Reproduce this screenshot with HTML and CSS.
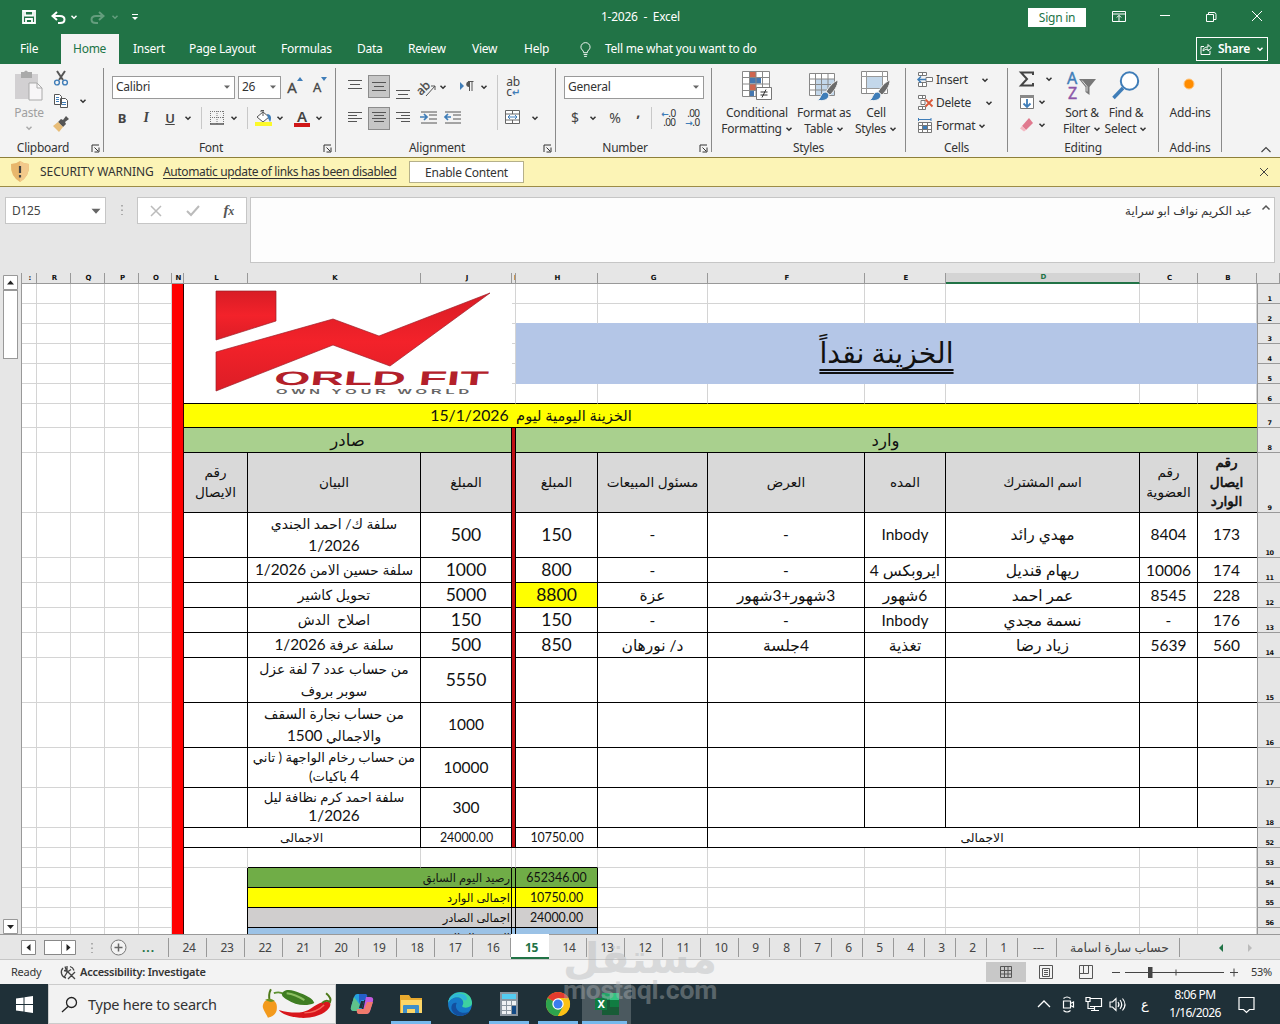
FILE: index.html
```html
<!DOCTYPE html>
<html lang="en">
<head>
<meta charset="utf-8">
<title>1-2026 - Excel</title>
<link rel="stylesheet" href="styles.css">
</head>
<body>
<svg class="defs" aria-hidden="true">
  <symbol id="chev" viewBox="0 0 8 8"><path d="M1.500 2.800 4 5.200 6.500 2.800" fill="none" stroke="currentColor" stroke-width="1.500"/></symbol>
  <symbol id="tri" viewBox="0 0 8 8"><path d="M1 2.500h6L4 5.800z" fill="#666"/></symbol>
  <symbol id="launch" viewBox="0 0 9 9"><path d="M1 8V1h7M3.500 3.500 7 7M8 3.500V8H3.500" fill="none" stroke="#333"/></symbol>
  <symbol id="brush" viewBox="0 0 30 30"><path d="M29 9c-5 2-10 8-12 12l4 3c4-4 8-9 8-15z" fill="#6b6b6b" stroke="#f3f3f3"/><path d="M8 29c4 0 3-7 8-8 3 0 5 3 3 6-3 3-7 3-11 2z" fill="#3f7db8" stroke="#f3f3f3"/></symbol>
</svg>

<header class="title">
  <svg class="save" viewBox="0 0 14 14"><path d="M1 1h12v12H1zM3 1v4.500h8V1M4 13V9h6v4" fill="none" stroke="#fff" stroke-width="1.800"/></svg>
  <svg class="undo" viewBox="0 0 15 13"><path d="M6 1 1.500 5 6 9M2 5h7c6 0 6 7 0 7H7" fill="none" stroke="#fff" stroke-width="2"/></svg>
  <svg class="ch w"><use href="#chev"/></svg>
  <svg class="undo dim flip" viewBox="0 0 15 13"><path d="M6 1 1.500 5 6 9M2 5h7c6 0 6 7 0 7H7" fill="none" stroke="#fff" stroke-width="2"/></svg>
  <svg class="ch w dim"><use href="#chev"/></svg>
  <svg class="ch w" viewBox="0 0 8 8"><path d="M1 1.500h6" stroke="#fff"/><path d="M1 4h6L4 7z" fill="#fff"/></svg>
  <span class="doc">1-2026&nbsp; -&nbsp; Excel</span>
  <span class="signin">Sign in</span>
  <svg class="i14" viewBox="0 0 14 14"><path d="M.5 1.500h13v10H.5zM.5 4h13M7 11V5.500M4.800 7.500 7 5.300l2.200 2.200" fill="none" stroke="#fff"/></svg>
  <svg class="i14" viewBox="0 0 14 14"><path d="M2 5.500h10" stroke="#fff"/></svg>
  <svg class="i14" viewBox="0 0 14 14"><path d="M2.500 4.500h7v7h-7zM4.500 4.500v-2h5.500q2 0 2 2v5H9.500" fill="none" stroke="#fff"/></svg>
  <svg class="i14" viewBox="0 0 14 14"><path d="M2 1l10 10M12 1 2 11" stroke="#fff"/></svg>
</header>

<nav class="tabs">
  <span>File</span><span class="on">Home</span><span>Insert</span><span>Page Layout</span><span>Formulas</span><span>Data</span><span>Review</span><span>View</span><span>Help</span>
  <svg class="bulb" viewBox="0 0 12 17"><path d="M4 12c0-3-3-3-3-6a5 5 0 0 1 10 0c0 3-3 3-3 6zM4 14h4M4.500 16h3" fill="none" stroke="#fff"/></svg>
  <span>Tell me what you want to do</span>
  <span class="share"><svg class="i12" viewBox="0 0 12 12"><path d="M4 3.500H1v8h9V8M3 8q0-4 5-4V1.500L11.500 5 8 8V6Q5 6 3 8z" fill="none" stroke="#fff"/></svg>Share<svg class="ch w"><use href="#chev"/></svg></span>
</nav>

<section class="ribbon">
  <div class="group clip">
    <div class="body">
      <div class="big dis">
        <svg class="i30" viewBox="0 0 30 30"><path d="M1 3h23v25H1z" fill="#d2d0d2"/><path d="M7 1h3q2-3 4 0h4v6H7z" fill="#aaa"/><path d="M15 12h8l5 5v12H15z" fill="#f8f6f8" stroke="#aaa"/><path d="M23 12v5h5" fill="none" stroke="#aaa"/></svg>
        <span>Paste</span><svg class="ch"><use href="#chev"/></svg>
      </div>
      <div class="stack">
        <svg class="i16" viewBox="0 0 16 16"><path d="M4 1l6 9M12 1 6 10" stroke="#555" stroke-width="2"/><circle cx="4" cy="12.500" r="2.400" fill="none" stroke="#3f7db8" stroke-width="1.400"/><circle cx="12" cy="12.500" r="2.400" fill="none" stroke="#3f7db8" stroke-width="1.400"/></svg>
        <svg class="i16" viewBox="0 0 16 16"><path d="M1.500 1.500h5l2 2v8h-7zM7.500 5.500h5l2 2v7h-7z" fill="#fff" stroke="#555"/><path d="M3 4.500h3M3 6.500h3M3 8.500h3M9 9.500h4M9 11.500h4" stroke="#3f7db8"/></svg>
        <svg class="i16" viewBox="0 0 16 16"><path d="M13 0l3 3-4 3 1 2-3 3-5-5 3-3 2 1z" fill="#555"/><path d="M5 6l5 5-4 5-6-6z" fill="#e8bd78"/></svg>
      </div>
      <svg class="ch"><use href="#chev"/></svg>
    </div>
    <div class="label"><span>Clipboard</span><svg class="la"><use href="#launch"/></svg></div>
  </div>

  <div class="group font">
    <div class="body">
      <div class="row f1">
        <div class="combo">Calibri<svg class="ch"><use href="#tri"/></svg></div>
        <div class="combo">26<svg class="ch"><use href="#tri"/></svg></div>
        <div class="ltr">A<svg class="ch"><path d="M0 4 3 0l3 4z" fill="#3f7db8"/></svg></div>
        <div class="ltr sm">A<svg class="ch"><path d="M0 0h6L3 4z" fill="#3f7db8"/></svg></div>
      </div>
      <div class="row f2">
        <b>B</b><i>I</i><u>U</u><svg class="ch"><use href="#chev"/></svg><s></s>
        <svg class="i14" viewBox="0 0 14 14"><path d="M.5 0v13M13.500 0v13M7 0v13M0 .5h14M0 6.500h14" fill="none" stroke="#777" stroke-dasharray="1 1"/><path d="M0 13h14" stroke="#555" stroke-width="1.500"/></svg>
        <svg class="ch"><use href="#chev"/></svg><s></s>
        <svg class="i17" viewBox="0 0 17 17"><path d="M2 7l6-5 6 5-6 5z" fill="#fff" stroke="#555"/><path d="M8 6V1M6 2V.5h3" stroke="#555" fill="none"/><path d="M12 4c4 0 5 4 3 8l-2-4z" fill="#3f7db8"/><path d="M0 12h17v4H0z" fill="#fcf92a"/></svg>
        <svg class="ch"><use href="#chev"/></svg>
        <div class="fa">A</div>
        <svg class="ch"><use href="#chev"/></svg>
      </div>
    </div>
    <div class="label"><span>Font</span><svg class="la"><use href="#launch"/></svg></div>
  </div>

  <div class="group align">
    <div class="body">
      <div class="row a1">
        <svg class="i14" viewBox="0 0 14 14"><path d="M0 -3.500h14M2 .5h10M0 4.500h14" stroke="#555"/></svg>
        <div class="pressed"><svg class="i14" viewBox="0 0 14 14"><path d="M0 2.500h14M2 6.500h10M0 10.500h14" stroke="#555"/></svg></div>
        <svg class="i14" viewBox="0 0 14 14"><path d="M0 6.500h14M2 10.500h10M0 14.500h14" stroke="#555"/></svg>
        <svg class="i17" viewBox="0 0 17 17"><text x="0" y="9" font-size="12" transform="rotate(-45 7 9)" fill="#444" stroke="#444" stroke-width=".3">ab</text><path d="M7 14 16 4M12 4h4v4" fill="none" stroke="#555"/></svg>
        <svg class="ch up"><use href="#chev"/></svg>
        <svg class="i14 para up" viewBox="0 0 14 14"><path d="M0 2l4 4L0 10z" fill="#3f7db8"/><path d="M9.500 11V2M12 11V2M13.500 1.500H8" stroke="#555" fill="none"/><path d="M9 1.500a2.500 2.500 0 0 0 0 5.500z" fill="#555"/></svg>
        <svg class="ch up"><use href="#chev"/></svg><s></s>
        <div class="wrap up">ab<br>c<em>↵</em></div>
      </div>
      <div class="row a2">
        <svg class="i14" viewBox="0 0 14 14"><path d="M0 1.500h14M0 4.500h9M0 7.500h14M0 10.500h9" stroke="#555"/></svg>
        <div class="pressed"><svg class="i14" viewBox="0 0 14 14"><path d="M0 1.500h14M2 4.500h10M0 7.500h14M2 10.500h10" stroke="#555"/></svg></div>
        <svg class="i14" viewBox="0 0 14 14"><path d="M0 1.500h14M5 4.500h9M0 7.500h14M5 10.500h9" stroke="#555"/></svg>
        <svg class="i17" viewBox="0 0 17 14"><path d="M1 .5h16M9 3.500h8M9 7.500h8M1 11.500h16" stroke="#555"/><path d="M0 5.500h6M4 2.500l3 3-3 3" fill="none" stroke="#3f7db8" stroke-width="1.700"/></svg>
        <svg class="i17" viewBox="0 0 17 14"><path d="M1 .5h16M9 3.500h8M9 7.500h8M1 11.500h16" stroke="#555"/><path d="M1 5.500h6M4 2.500l-3 3 3 3" fill="none" stroke="#3f7db8" stroke-width="1.700"/></svg>
        <s></s>
        <svg class="i16" viewBox="0 0 16 16"><path d="M.5 .5h14v13H.5zM.5 4h14M.5 10h14M7.500 .5V4M7.500 10v3" fill="#fff" stroke="#666"/><path d="M3 7h9M5 5 3 7l2 2M10 5l2 2-2 2" fill="none" stroke="#3f7db8"/></svg>
        <svg class="ch"><use href="#chev"/></svg>
      </div>
    </div>
    <div class="label"><span>Alignment</span><svg class="la"><use href="#launch"/></svg></div>
  </div>

  <div class="group num">
    <div class="body">
      <div class="row n1"><div class="combo">General<svg class="ch"><use href="#tri"/></svg></div></div>
      <div class="row n2">
        <span class="sym">$</span><svg class="ch"><use href="#chev"/></svg><span class="sym">%</span><span class="sym comma">,</span><s></s>
        <div class="dec"><em>←</em>.0<br>.00</div><div class="dec">.00<br><em>→</em>.0</div>
      </div>
    </div>
    <div class="label"><span>Number</span><svg class="la"><use href="#launch"/></svg></div>
  </div>

  <div class="group styles">
    <div class="body">
      <div class="big"><svg class="i30" viewBox="0 0 30 30"><path d="M.5 .5h27v25H.5z" fill="#fff"/><path d="M8 .5h6v6H8zM8 13h6v6H8z" fill="#cf6650"/><path d="M8 6.500h11v6H8zM8 19h4v6H8z" fill="#4678b0"/><path d="M.5 .5h27v25H.5zM7.500 0v25M14 0v25M20.500 0v25M0 6.500h27M0 13h27M0 19.500h27" fill="none" stroke="#888"/><path d="M14.500 16.500h15v12h-15z" fill="#fff" stroke="#777"/><path d="M18.500 21h7M18.500 24h7M24 18.500l-4 8" stroke="#333"/></svg><span>Conditional</span><span>Formatting <svg class="ch"><use href="#chev"/></svg></span></div>
      <div class="big"><svg class="i30" viewBox="0 0 30 30"><path d="M.5 2.500h25v22H.5z" fill="#fff"/><path d="M7 8h18v16H7z" fill="#c3d7ea"/><path d="M.5 2.500h25v22H.5zM6.500 2v22M12.500 2v22M19 2v22M0 8h25M0 13.500h25M0 19h25" fill="none" stroke="#888"/><use href="#brush"/></svg><span>Format as</span><span>Table <svg class="ch"><use href="#chev"/></svg></span></div>
      <div class="big"><svg class="i30" viewBox="0 0 30 30"><path d="M.5 .5h26v22H.5z" fill="#fff" stroke="#888"/><path d="M6 6h15v11H6z" fill="#c3d7ea"/><path d="M5.500 0v22M21.500 0v22M0 5.500h26M0 17.500h26" stroke="#999"/><use href="#brush"/></svg><span>Cell</span><span>Styles <svg class="ch"><use href="#chev"/></svg></span></div>
    </div>
    <div class="label"><span>Styles</span></div>
  </div>

  <div class="group cells">
    <div class="body">
      <div class="item"><svg class="i16" viewBox="0 0 16 16"><path d="M1.500 .5h8v3h-8zM5.500 .5v3M1.500 10.500h8v4h-8zM5.500 10.500v4M9 5.500h6.500v4H9z" fill="#fff" stroke="#777"/><path d="M1 7.500h8M4 4.500l-3 3 3 3" fill="none" stroke="#3f7db8" stroke-width="1.500"/></svg><span>Insert</span><svg class="ch m1"><use href="#chev"/></svg></div>
      <div class="item"><svg class="i16" viewBox="0 0 16 16"><path d="M1.500 .5h7v3h-7zM5.500 .5v3M1.500 11.500h7v3h-7zM5.500 11.500v3M4 5.500h4v4H4z" fill="#fff" stroke="#777"/><path d="M8.500 4.500l7 7M15.500 4.500l-7 7" stroke="#d9593a" stroke-width="1.800"/></svg><span>Delete</span><svg class="ch m2"><use href="#chev"/></svg></div>
      <div class="item"><svg class="i16" viewBox="0 0 16 16"><path d="M1.500 4.500h13v10h-13zM5.500 4v10M10.500 4v10M1 7.500h13M1 11.500h13" fill="#fff" stroke="#777"/><path d="M6 8h4v3H6z" fill="#3f7db8"/><path d="M1 1.500h13M1.500 0v3M14 0v3" stroke="#3f7db8"/></svg><span>Format</span><svg class="ch m3"><use href="#chev"/></svg></div>
    </div>
    <div class="label"><span>Cells</span></div>
  </div>

  <div class="group edit">
    <div class="body">
      <div class="tools">
        <div><svg class="i16" viewBox="0 0 16 16"><path d="M14 4V1.500H2L8 8l-6 6.500h12V12" fill="none" stroke="#444" stroke-width="2"/></svg><svg class="ch m1"><use href="#chev"/></svg></div>
        <div><svg class="i16" viewBox="0 0 16 16"><path d="M1.500 1.500h13v13h-13z" fill="#fff" stroke="#777"/><path d="M1 1h14v3H1z" fill="#888"/><path d="M8 5v8M4.500 9.500 8 13l3.500-3.500" fill="none" stroke="#3f7db8" stroke-width="1.800"/></svg><svg class="ch"><use href="#chev"/></svg></div>
        <div><svg class="i16" viewBox="0 0 16 16"><path d="M10 1l4 5-7 7-4-4z" fill="#e0798e"/><path d="M3 9l4 4-2 1.500-4-3z" fill="#f4b8c2"/></svg><svg class="ch"><use href="#chev"/></svg></div>
      </div>
      <div class="big"><svg class="i30" viewBox="0 0 30 30"><text x="0" y="13" font-size="16" fill="#3f7db8" stroke="#3f7db8" stroke-width=".4">A</text><text x="1" y="28" font-size="16" fill="#8c56a8" stroke="#8c56a8" stroke-width=".4">Z</text><path d="M12 8h17l-6.500 8v8l-4-3v-5z" fill="#777"/><path d="M15 9.500l5 6v5" fill="none" stroke="#ddd"/></svg><span>Sort &amp;</span><span>Filter <svg class="ch"><use href="#chev"/></svg></span></div>
      <div class="big"><svg class="i30" viewBox="0 0 30 30"><circle cx="18.500" cy="10" r="8.700" fill="#fff" stroke="#3f7db8" stroke-width="2"/><path d="M12 17 2.500 27" stroke="#3f7db8" stroke-width="3.500"/></svg><span>Find &amp;</span><span>Select <svg class="ch"><use href="#chev"/></svg></span></div>
    </div>
    <div class="label"><span>Editing</span></div>
  </div>

  <div class="group add">
    <div class="body"><div class="big"><svg class="i30" viewBox="0 0 30 30"><circle cx="14" cy="13" r="5" fill="#ff8c00" stroke="#ffc680"/></svg><span>Add-ins</span></div></div>
    <div class="label"><span>Add-ins</span></div>
  </div>
  <div class="collapse"><svg class="i12" viewBox="0 0 12 12"><path d="M1.500 8 6 3.500 10.500 8" fill="none" stroke="#444" stroke-width="1.200"/></svg></div>
</section>

<section class="warn">
  <svg class="shield" viewBox="0 0 20 22"><path d="M10 0q4 3 9 3 1 12-9 18Q0 15 1 3q5 0 9-3z" fill="#e8b76c"/><path d="M10 0q4 3 9 3 1 12-9 18z" fill="#f2c98b"/><path d="M10 5v7M10 14v2.500" stroke="#444" stroke-width="2.200"/></svg>
  <span class="w1">SECURITY WARNING</span>
  <span class="w2">Automatic update of links has been disabled</span>
  <span class="enable">Enable Content</span>
  <svg class="i12" viewBox="0 0 12 12"><path d="M2 2l8 8M10 2l-8 8" stroke="#444"/></svg>
</section>

<section class="formula">
  <div class="name">D125<svg class="i12" viewBox="0 0 8 8"><use href="#tri"/></svg></div>
  <svg class="dots" viewBox="0 0 4 12"><path d="M2 1v10" stroke="#999" stroke-width="1.500" stroke-dasharray="1.500 3"/></svg>
  <div class="fx">
    <svg class="i14" viewBox="0 0 14 14"><path d="M1 2l10 10M11 2 1 12" stroke="#bbb" stroke-width="1.500"/></svg>
    <svg class="i14" viewBox="0 0 14 14"><path d="M0 7l4 4 8-9" fill="none" stroke="#bbb" stroke-width="2"/></svg>
    <i>f<small>x</small></i>
  </div>
  <div class="input"><bdi dir="rtl">عبد الكريم نواف ابو سراية</bdi><svg class="i12" viewBox="0 0 12 12"><path d="M2.500 7.500 6 4l3.500 3.500" fill="none" stroke="#555" stroke-width="1.500"/></svg></div>
</section>

<main class="sheet">
  <div class="vscroll">
    <svg viewBox="0 0 15 15"><path d="M.5 .5h14v14H.5z" fill="#fff" stroke="#999"/><path d="M4 9.500h7L7.500 5.500z" fill="#222"/></svg>
    <div class="thumb"></div>
    <svg viewBox="0 0 15 15"><path d="M.5 .5h14v14H.5z" fill="#fff" stroke="#999"/><path d="M4 6h7L7.500 10z" fill="#222"/></svg>
  </div>
  <table>
    <colgroup><col class="c15"><col class="c34"><col class="c34"><col class="c34"><col class="c33"><col class="c12"><col class="c64"><col class="c173"><col class="c91"><col class="c4"><col class="c82"><col class="c110"><col class="c157"><col class="c81"><col class="c194"><col class="c58"><col class="c59"><col class="c23"></colgroup>
    <tr class="head"><th>:</th><th>R</th><th>Q</th><th>P</th><th>O</th><th>N</th><th>L</th><th>K</th><th>J</th><th>I</th><th>H</th><th>G</th><th>F</th><th>E</th><th class="sel">D</th><th>C</th><th>B</th><th></th></tr>
    <tr class="h20"><td></td><td></td><td></td><td></td><td></td><td class="red" rowspan="24"></td><td colspan="3" rowspan="6" class="logo">
      <svg viewBox="0 0 328 119"><defs><linearGradient id="rg" x1="0" y1="0" x2="0" y2="1"><stop offset="0" stop-color="#d81c25"/><stop offset=".5" stop-color="#f3222a"/><stop offset="1" stop-color="#dc1d26"/></linearGradient></defs><path d="M32 7h60v30L32 56z" fill="url(#rg)" stroke="#9c2029" stroke-width=".7"/><path d="M32 68 149 35l46 17L306 9 206 82 149 61 32 107z" fill="url(#rg)" stroke="#9c2029" stroke-width=".7"/><text x="89" y="101" textLength="214" lengthAdjust="spacingAndGlyphs" transform="translate(13 0) skewX(-7)" font-size="19.500" font-weight="bold" font-family="Liberation Sans" fill="#b3202a">ORLD FIT</text><text x="92" y="110" textLength="197" lengthAdjust="spacingAndGlyphs" letter-spacing="2" font-size="7.500" font-weight="bold" font-family="Liberation Sans" fill="#666">OWN YOUR WORLD</text></svg></td><td></td><td></td><td></td><td></td><td></td><td></td><td></td><td></td><th>1</th></tr>
    <tr class="h20 nb"><td></td><td></td><td></td><td></td><td></td><td></td><td></td><td></td><td></td><td></td><td></td><td></td><td></td><th>2</th></tr>
    <tr class="h20"><td></td><td></td><td></td><td></td><td></td><td></td><td class="blue" colspan="7" rowspan="3"><bdi>الخزينة نقداً</bdi></td><th>3</th></tr>
    <tr class="h20"><td></td><td></td><td></td><td></td><td></td><td></td><th>4</th></tr>
    <tr class="h20"><td></td><td></td><td></td><td></td><td></td><td></td><th>5</th></tr>
    <tr class="h20 pre"><td></td><td></td><td></td><td></td><td></td><td></td><td></td><td></td><td></td><td></td><td></td><td></td><td></td><th>6</th></tr>
    <tr class="h24 k"><td></td><td></td><td></td><td></td><td></td><td class="yel date" colspan="11"><bdi dir="rtl">الخزينة اليومية ليوم&nbsp; <span>15/1/2026</span></bdi></td><th>7</th></tr>
    <tr class="h25 k"><td></td><td></td><td></td><td></td><td></td><td class="grn" colspan="3">صادر</td><td class="bar" rowspan="12"></td><td class="grn" colspan="7">وارد</td><th>8</th></tr>
    <tr class="h60 k hd"><td></td><td></td><td></td><td></td><td></td><td>رقم<br>الايصال</td><td>البيان</td><td>المبلغ</td><td>المبلغ</td><td>مسئول المبيعات</td><td>العرض</td><td>المده</td><td>اسم المشترك</td><td>رقم<br>العضوية</td><td class="bold">رقم<br>ايصال<br>الوارد</td><th>9</th></tr>
    <tr class="h45 k"><td></td><td></td><td></td><td></td><td></td><td></td><td class="ds">سلفة ك/ احمد الجندي<br><span>1/2026</span></td><td class="lg">500</td><td class="lg">150</td><td>-</td><td>-</td><td>Inbody</td><td>مهدي رائد</td><td>8404</td><td>173</td><th>10</th></tr>
    <tr class="h25 k"><td></td><td></td><td></td><td></td><td></td><td></td><td class="ds">سلفة حسين الامن <span>1/2026</span></td><td class="lg">1000</td><td class="lg">800</td><td>-</td><td>-</td><td>ايروبكس 4</td><td>ريهام قنديل</td><td>10006</td><td>174</td><th>11</th></tr>
    <tr class="h25 k"><td></td><td></td><td></td><td></td><td></td><td></td><td class="ds">تحويل كاشير</td><td class="lg">5000</td><td class="lg yel">8800</td><td>عزة</td><td>3شهور+3شهور</td><td>6شهور</td><td>عمر احمد</td><td>8545</td><td>228</td><th>12</th></tr>
    <tr class="h25 k"><td></td><td></td><td></td><td></td><td></td><td></td><td class="ds">اصلاح&nbsp; الدش</td><td class="lg">150</td><td class="lg">150</td><td>-</td><td>-</td><td>Inbody</td><td>نسمة مجدي</td><td>-</td><td>176</td><th>13</th></tr>
    <tr class="h25 k"><td></td><td></td><td></td><td></td><td></td><td></td><td class="ds">سلفة عرفة <span>1/2026</span></td><td class="lg">500</td><td class="lg">850</td><td>د/ نورهان</td><td>4جلسة</td><td>تغذية</td><td>زياد رضا</td><td>5639</td><td>560</td><th>14</th></tr>
    <tr class="h45 k"><td></td><td></td><td></td><td></td><td></td><td></td><td class="ds">من حساب عدد <span>7</span> لفة عزل<br>سوبر بروف</td><td class="lg">5550</td><td></td><td></td><td></td><td></td><td></td><td></td><td></td><th>15</th></tr>
    <tr class="h45 k"><td></td><td></td><td></td><td></td><td></td><td></td><td class="ds">من حساب نجارة السقف<br>والاجمالي <span>1500</span></td><td>1000</td><td></td><td></td><td></td><td></td><td></td><td></td><td></td><th>16</th></tr>
    <tr class="h40 k"><td></td><td></td><td></td><td></td><td></td><td></td><td class="ds sm">من حساب رخام الواجهة ( تاني<br><span>4</span> باكيات)</td><td>10000</td><td></td><td></td><td></td><td></td><td></td><td></td><td></td><th>17</th></tr>
    <tr class="h40 k"><td></td><td></td><td></td><td></td><td></td><td></td><td class="ds sm">سلفة احمد كرم نظافة ليل<br><span>1/2026</span></td><td>300</td><td></td><td></td><td></td><td></td><td></td><td></td><td></td><th>18</th></tr>
    <tr class="h20 k tot"><td></td><td></td><td></td><td></td><td></td><td colspan="2" class="tl">الاجمالى</td><td>24000.00</td><td>10750.00</td><td></td><td colspan="5">الاجمالى</td><th>52</th></tr>
    <tr class="h20 pre2"><td></td><td></td><td></td><td></td><td></td><td></td><td></td><td></td><td></td><td></td><td></td><td></td><td></td><td></td><td></td><td></td><th>53</th></tr>
    <tr class="h20 sum s1"><td></td><td></td><td></td><td></td><td></td><td></td><td colspan="2">رصيد اليوم السابق</td><td></td><td>652346.00</td><td></td><td></td><td></td><td></td><td></td><td></td><th>54</th></tr>
    <tr class="h20 sum s2"><td></td><td></td><td></td><td></td><td></td><td></td><td colspan="2">اجمالى الوارد</td><td></td><td>10750.00</td><td></td><td></td><td></td><td></td><td></td><td></td><th>55</th></tr>
    <tr class="h20 sum s3"><td></td><td></td><td></td><td></td><td></td><td></td><td colspan="2">اجمالى الصادر</td><td></td><td>24000.00</td><td></td><td></td><td></td><td></td><td></td><td></td><th>56</th></tr>
    <tr class="h20 sum s4"><td></td><td></td><td></td><td></td><td></td><td></td><td colspan="2">الرصيد الحالى</td><td></td><td></td><td></td><td></td><td></td><td></td><td></td><td></td><th></th></tr>
  </table>
</main>

<nav class="sheets">
  <div class="hs">
    <svg viewBox="0 0 15 15"><path d="M.5 .5h14v14H.5z" fill="#fff" stroke="#888"/><path d="M9.500 4v7L5.500 7.500z" fill="#222"/></svg>
    <div class="hthumb"></div>
    <svg viewBox="0 0 15 15"><path d="M.5 .5h14v14H.5z" fill="#fff" stroke="#888"/><path d="M5.500 4v7l4-3.500z" fill="#222"/></svg>
    <svg class="dots" viewBox="0 0 4 12"><path d="M2 1v10" stroke="#999" stroke-width="1.500" stroke-dasharray="1.500 3"/></svg>
    <svg class="plus" viewBox="0 0 17 17"><circle cx="8.500" cy="8.500" r="7.500" fill="#f3f3f3" stroke="#777"/><path d="M8.500 4.500v8M4.500 8.500h8" stroke="#666" stroke-width="1.500"/></svg>
    <b>...</b>
  </div>
  <span>24</span><span>23</span><span>22</span><span>21</span><span>20</span><span>19</span><span>18</span><span>17</span><span>16</span><span class="cur">15</span><span>14</span><span>13</span><span>12</span><span>11</span><span>10</span><span class="n">9</span><span class="n">8</span><span class="n">7</span><span class="n">6</span><span class="n">5</span><span class="n">4</span><span class="n">3</span><span class="n">2</span><span class="n">1</span><span class="dash">---</span><span class="last">حساب سارة اسامة</span>
  <svg class="navi" viewBox="0 0 40 12"><path d="M8 2v8L4 6z" fill="#217346"/><path d="M33 2v8l4-4z" fill="#bbb"/></svg>
</nav>

<footer class="status">
  <span class="ready">Ready</span>
  <svg class="i17" viewBox="0 0 17 17"><path d="M6 14A6 6 0 0 1 3 4M5 2.500l2 6-3 5M7 2v6M10 2.500a6 6 0 0 1 4 4M8 8l7 7M15 8l-7 7M4 6.500l4 1 3-2" fill="none" stroke="#444" stroke-width="1.300"/></svg>
  <b>Accessibility: Investigate</b>
  <div class="view act"><svg class="i14" viewBox="0 0 14 14"><path d="M1.500 1.500h11v11h-11zM5.500 1v12M9 1v12M1 5.500h12M1 9h12" fill="none" stroke="#555"/></svg></div>
  <div class="view"><svg class="i14" viewBox="0 0 14 14"><path d="M.5 .5h13v13H.5zM3.500 3.500h7v8h-7zM5 5.500h4M5 7.500h4M5 9.500h4" fill="none" stroke="#555"/></svg></div>
  <div class="view"><svg class="i14" viewBox="0 0 14 14"><path d="M.5 .5h13v13H.5zM4.500 1v7M.5 8.500h9V1" fill="none" stroke="#555"/></svg></div>
  <svg class="zoom" viewBox="0 0 126 12"><path d="M0 6.500h8M118 6.500h8M122 2.500v8M13 6.500h99M64 3.500v6" stroke="#444"/><path d="M36 1h4.500v11H36z" fill="#444"/></svg>
  <span class="pct">53%</span>
</footer>

<footer class="task">
  <div class="start"><svg class="i17" viewBox="0 0 17 17"><path d="M0 2.500 7.500 1.500V8H0zM8.500 1.300 17 0v8H8.500zM0 9h7.500v6.500L0 14.500zM8.500 9H17v8l-8.500-1.300z" fill="#fff"/></svg></div>
  <div class="search">
    <svg class="i17" viewBox="0 0 17 17"><circle cx="10.500" cy="6.500" r="5" fill="none" stroke="#222" stroke-width="1.300"/><path d="M7 10.500 1 16" stroke="#222" stroke-width="1.300"/></svg>
    <span>Type here to search</span>
    <svg class="peppers" viewBox="0 0 70 32"><path d="M6 12c-4-1-7 4-6 8 2 5 4 7 5 10 4-1 9-4 9-9 1-7-4-10-8-9z" fill="#f39a1c"/><path d="M7 13q-2-6 1-12" fill="none" stroke="#4e7a1a" stroke-width="2"/><path d="M2 12q5-3 10 1l-4 1z" fill="#6f9423"/><path d="M11 5q6-2 10 1" stroke="#5c9130" stroke-width="2" fill="none"/><path d="M20 4c4-4 11-2 18 1 8 3 13 6 14 10-8 4-20 2-27-3-5-3-7-5-5-8z" fill="#3f7d22"/><path d="M24 5q9 1 18 7" stroke="#8cbf62" stroke-width="2" fill="none"/><path d="M62 14c6-2 8 2 5 6-5 7-18 11-30 10-10-1-18-4-21-8 14 4 24 3 30 0 6-3 9-7 16-8z" fill="#d8161b"/><path d="M62 17q-8 8-20 8" fill="none" stroke="#f56a5c" stroke-width="1.500"/><path d="M60 15q4-4 8-1 2-4-4-9" fill="none" stroke="#4e7a1a" stroke-width="2"/></svg>
  </div>
  <div class="app"><svg class="i24" viewBox="0 0 24 24"><path d="M7 2h9l-5 17H4q-4 0-3-4L4 5q1-3 3-3z" fill="#24a0df"/><path d="M4 5 1 15q-1 4 3 4h4l2-6z" fill="#5fc28a"/><path d="M9 2h6q3 0 2 3l1 3h-5q-3 0-4 4z" fill="#245fc9"/><path d="M16 5h4q4 0 3 4l-3 10q-1 3-4 3H9q3 0 4-3z" fill="#c45ae0"/><path d="M7 17h7l3-7h6l-3 9q-1 3-4 3H9q-3 0-2-5z" fill="#f07a6c"/><path d="M11 9h3l-2 7H9z" fill="#1f3038"/></svg></div>
  <div class="app run"><svg class="i24" viewBox="0 0 24 24"><path d="M1 3h9l2 3h11v15H1z" fill="#e8a92e"/><path d="M2 8h21v13H2z" fill="#fdd667"/><path d="M4 21v-7q0-1 1-1h14q1 0 1 1v7h-4v-4H8v4z" fill="#3e8fc9"/></svg></div>
  <div class="app"><svg class="i26" viewBox="0 0 24 24"><circle cx="12" cy="12" r="11" fill="#1679c8"/><path d="M1 11C2-2 22-2 23 10c1 5-5 6-8 5-2-1 0-2 0-4 0-7-11-7-14 0z" fill="#3ed0a0"/><path d="M1 11c1-8 9-10 14-8 6 2 3 9-1 4C9 3 3 7 1 11z" fill="#2fb6dc"/><path d="M9 11c-3 5 3 12 12 8-6 7-16 4-17-3 0-4 2-6 5-5z" fill="#134f9e"/></svg></div>
  <div class="app run"><svg class="i24" viewBox="0 0 24 24"><path d="M3 0h18v24H3z" fill="#8b96a0"/><path d="M5 2h14v5H5z" fill="#55cdf2"/><path d="M5 9h4v4H5zM10 9h4v4h-4zM15 9h4v4h-4zM5 14h4v4H5zM10 14h4v4h-4zM5 19h4v3H5zM10 19h4v3h-4z" fill="#eef1f4"/><path d="M15 14h4v8h-4z" fill="#124a86"/></svg></div>
  <div class="app run"><svg class="i24" viewBox="0 0 24 24"><circle cx="12" cy="12" r="12" fill="#fbc116"/><path d="M12 12 1.600 6A12 12 0 0 1 22.400 6z" fill="#e33b2e"/><path d="M1.600 6A12 12 0 0 0 12 24l5-9-5-3z" fill="#2da44e"/><path d="M12 6h10.400A12 12 0 0 1 12 24l5-9z" fill="#fbc116"/><circle cx="12" cy="12" r="5.700" fill="#fff"/><circle cx="12" cy="12" r="4.500" fill="#3b7ded"/></svg></div>
  <div class="app run xl"><svg class="i24" viewBox="0 0 24 24"><path d="M7 1h17v22H7z" fill="#21a366"/><path d="M15 1h9v7h-9z" fill="#33c481"/><path d="M7 8h8v7H7zM7 15h17v8H7z" fill="#185c37"/><path d="M15 8h9v7h-9z" fill="#107c41"/><path d="M0 6h12v12H0z" fill="#107c41"/><text x="2.500" y="16" font-size="11" font-weight="bold" fill="#fff">X</text></svg></div>
  <div class="tray">
    <svg class="i14" viewBox="0 0 14 14"><path d="M1 10 7 4l6 6" fill="none" stroke="#fff" stroke-width="1.300"/></svg>
    <svg class="i17" viewBox="0 0 17 17"><path d="M2.500 5h7v7h-7zM9.500 7.500l3-1.500v5l-3-1.500M2.500 2.500q3.500-3 7 0M2.500 14.500q3.500 3 7 0" fill="none" stroke="#fff" stroke-width="1.200"/></svg>
    <svg class="i17" viewBox="0 0 17 17"><path d="M5 2.500h11.500v8H5M1 1.500h4v4H1zM3 5.500v7h6M9.500 10.500v4M6 14.500h8" fill="none" stroke="#fff" stroke-width="1.200"/></svg>
    <svg class="i17" viewBox="0 0 17 17"><path d="M0 6h2.500L6 2.500v12L2.500 11H0zM8 6q2 2.500 0 5M10 4q3.500 4.500 0 9M12.500 2.500q5 6 0 12" fill="none" stroke="#fff" stroke-width="1.100"/></svg>
    <span class="lang">ع</span>
    <span class="clock">8:06 PM<br>1/16/2026</span>
    <svg class="i17" viewBox="0 0 17 17"><path d="M1 1.500h15v12h-4.500l-3 3-3-3H1z" fill="none" stroke="#fff" stroke-width="1.200"/></svg>
  </div>
</footer>

<svg class="mark" viewBox="0 0 160 80"><text x="3" y="47" textLength="154" lengthAdjust="spacingAndGlyphs" font-size="42" font-weight="bold" direction="ltr">مستقل</text><text x="3" y="73" textLength="154" lengthAdjust="spacingAndGlyphs" font-size="25" font-weight="bold" font-family="Roboto">mostaql.com</text></svg>
</body>
</html>
```
FILE: styles.css
```css
* { box-sizing: border-box; }
body { margin: 0; width: 1280px; height: 1024px; overflow: hidden; position: relative; background: #e6e6e6; font: 12px/16px "Noto Sans", "DejaVu Sans", sans-serif; letter-spacing: -.25px; color: #333; }
svg { display: block; flex: none; overflow: visible; }
.defs { width: 0; height: 0; position: absolute; }
.ch { width: 8px; height: 8px; color: #333; }
.ch.w { color: #fff; }
.dim { opacity: .3; }
.flip { transform: scaleX(-1); }
.la { width: 9px; height: 9px; }
.i12 { width: 12px; height: 12px; } .i14 { width: 14px; height: 14px; } .i16 { width: 16px; height: 16px; } .i17 { width: 17px; height: 17px; }
.i24 { width: 24px; height: 24px; } .i26 { width: 26px; height: 26px; } .i30 { width: 30px; height: 30px; }

.title { height: 34px; background: #217346; color: #fff; display: grid; align-items: center; grid-template-columns: 29px 19px 20px 21px 20px 470px 427px 84px 46px 46px 46px auto; padding-left: 22px; }
.title .save { width: 14px; height: 14px; }
.undo { width: 15px; height: 13px; }
.signin { width: 58px; height: 19px; background: #fff; color: #217346; text-align: center; line-height: 19px; }

.tabs { height: 30px; background: #217346; color: #fff; display: grid; align-items: center; line-height: 30px; grid-template-columns: 53px 60px 56px 92px 76px 51px 64px 52px 56px 25px 591px 72px; padding-left: 20px; }
.tabs .on { background: #f3f3f3; color: #217346; width: 58px; margin-left: -12px; padding-left: 12px; }
.bulb { width: 11px; height: 17px; }
.share { display: flex; align-items: center; justify-content: space-between; height: 24px; border: 1px solid #fff; padding: 0 3px; font-weight: 600; }

.ribbon { height: 94px; background: #f3f3f3; display: flex; border-bottom: 1px solid #8d7f3a; padding-top: 4px; }
.group { height: 84px; border-right: 1px solid #8a8a8a; display: flex; flex-direction: column; }
.body { height: 72px; flex: none; }
.label { display: flex; flex: none; height: 16px; line-height: 16px; align-items: center; }
.label span { flex: 1; text-align: center; }
.label .la { margin-right: 3px; }
.label span:not(:last-child) { padding-right: 5px; }
.clip { width: 104px; } .font { width: 232px; } .align { width: 220px; } .num { width: 156px; } .styles { width: 194px; } .cells { width: 102px; } .edit { width: 151px; } .add { width: 63px; }
.big { display: flex; flex-direction: column; align-items: center; padding-top: 3px; white-space: nowrap; }
.big .i30 { margin-bottom: 4px; }
.big span { display: flex; align-items: center; gap: 3px; }
.dis { color: #a0a0a0; } .dis .ch { color: #aaa; margin-top: 3px; }
.clip .body { display: grid; grid-template-columns: 53px 26px auto; align-items: start; }
.clip .big { padding-left: 5px; }
.stack { display: flex; flex-direction: column; gap: 7px; padding-top: 2px; }
.clip .body > .ch { margin-top: 29px; }

.row { display: grid; align-items: center; justify-items: center; height: 24px; }
.row + .row { margin-top: 7px; }
.row s { width: 1px; height: 22px; background: #c8c8c8; }
.font .body, .align .body, .num .body { padding-top: 7px; }
.combo { width: 100%; height: 23px; border: 1px solid #999; background: #fff; display: flex; align-items: center; justify-content: space-between; padding: 0 3px; }
.f1 { grid-template-columns: 123px 43px 22px 22px; padding-left: 8px; column-gap: 3px; }
.ltr { display: flex; font-size: 15px; line-height: 20px; color: #444; -webkit-text-stroke: .3px #444; }
.ltr.sm { font-size: 13px; }
.ltr .ch { width: 6px; height: 6px; }
.f2 { grid-template-columns: 24px 24px 24px 12px 14px 18px 16px 10px 22px 12px 4px 24px 10px; padding-left: 6px; font-size: 14px; color: #444; line-height: 14px; }
.f2 b { font-size: 13px; }
.f2 u { font-weight: 600; font-size: 13px; }
.f2 .fa { grid-column: 12; border-bottom: 4px solid #d01717; width: 16px; text-align: center; line-height: 13px; height: 17px; font-size: 15px; font-weight: 600; }
.f2 i, .fx i { font-family: "Liberation Serif", serif; font-weight: bold; }
.a1 { grid-template-columns: 22px 26px 22px 26px 6px 34px 8px 18px 14px; padding-left: 8px; }
.a1 .pressed, .a1 .up { margin-bottom: 8px; }
.a2 { grid-template-columns: 22px 26px 22px 28px 20px 30px 10px 22px 22px; padding-left: 8px; }
.a1 s { height: 31px; align-self: start; }
.a2 s { height: 24px; grid-column: 7; }
.para { margin-left: 7px; }
.pressed { width: 22px; height: 23px; background: #c6c6c6; border: 1px solid #8c8c8c; display: grid; place-items: center; }
.wrap { line-height: 10px; font-size: 12px; color: #444; }
em { font-style: normal; color: #3f7db8; font-size: 10px; font-weight: bold; }
.n1 { grid-template-columns: 140px; padding-left: 8px; }
.n2 { grid-template-columns: 18px 18px 26px 20px 7px 24px 24px; padding-left: 10px; }
.sym { font-size: 14px; color: #444; } .comma { font-weight: bold; line-height: 6px; padding-bottom: 12px; }
.dec { font-size: 10px; line-height: 9px; text-align: right; width: 17px; letter-spacing: -.6px; }
.dec em { font-size: 9px; }
.styles .body { display: grid; grid-template-columns: 90px 44px 60px; justify-items: center; }
.cells .body { padding: 0 0 0 11px; }
.item { display: flex; align-items: center; height: 23px; gap: 3px; }
.item .ch { margin-left: auto; } .item .m1 { margin-right: 18px; } .item .m2 { margin-right: 14px; } .item .m3 { margin-right: 21px; }
.edit .body { display: grid; grid-template-columns: 52px 44px 44px; justify-items: center; align-items: start; }
.tools { justify-self: start; padding: 0 0 0 11px; margin-top: -1px; }
.tools div { display: flex; align-items: center; height: 23px; gap: 3px; }
.tools .m1 { margin-left: 7px; }
.collapse { flex: 1; display: flex; align-items: end; justify-content: end; padding: 0 8px 1px 0; }

.warn { height: 29px; background: #fcf4b6; border-bottom: 1px solid #9c8c47; display: grid; grid-template-columns: 30px 123px 246px 849px auto; padding-left: 10px; align-items: center; }
.shield { width: 20px; height: 22px; }
.w1 { letter-spacing: -.05px; }
.w2 { text-decoration: underline; text-underline-offset: 2px; white-space: nowrap; letter-spacing: -.37px; }
.enable { width: 115px; height: 22px; border: 1px solid #b5b08a; background: #fff; text-align: center; line-height: 21px; }

.formula { height: 86px; display: flex; padding: 10px 5px 0; align-items: flex-start; }
.name { width: 101px; height: 27px; border: 1px solid #c6c6c6; background: #fff; display: flex; align-items: center; justify-content: space-between; padding: 0 3px 0 6px; color: #444; }
.dots { width: 4px; height: 12px; margin: 7px 13px 0 14px; }
.fx { width: 110px; height: 27px; border: 1px solid #c6c6c6; background: #fff; display: flex; align-items: center; justify-content: space-between; padding: 0 12px; font-size: 15px; color: #555; }
.fx small { font-size: 12px; }
.input { flex: 1; height: 66px; margin-left: 3px; border: 1px solid #c6c6c6; background: #fdfdfd; display: flex; justify-content: flex-end; gap: 8px; padding: 4px 2px; font-size: 11.800px; }

.sheet { height: 662px; display: flex; overflow: hidden; border-bottom: 1px solid #999; }
.vscroll { width: 22px; padding: 2px 0 0 3px; border-right: 1px solid #999; display: flex; flex-direction: column; }
.vscroll svg { width: 15px; height: 15px; }
.thumb { width: 15px; height: 70px; border: 1px solid #999; background: #fff; margin-bottom: 560px; }
table { border-collapse: separate; border-spacing: 0; table-layout: fixed; width: 1258px; height: 100px; font: 15.5px/22px Lato, "DejaVu Sans", sans-serif; letter-spacing: 0; color: #111; }
.c4 { width: 4px; } .c12 { width: 12px; } .c15 { width: 15px; } .c23 { width: 23px; } .c33 { width: 33px; } .c34 { width: 34px; } .c58 { width: 58px; } .c59 { width: 59px; } .c64 { width: 64px; } .c81 { width: 81px; } .c82 { width: 82px; } .c91 { width: 91px; } .c110 { width: 110px; } .c157 { width: 157px; } .c173 { width: 173px; } .c194 { width: 194px; }
td { direction: rtl; padding: 0; background: #fff; border: 0 solid #d4d4d4; border-width: 0 1px 1px 0; text-align: center; vertical-align: middle; white-space: nowrap; }
tr { height: 20px; }
.h24 { height: 24px; } .h25 { height: 25px; } .h40 { height: 40px; } .h45 { height: 45px; } .h60 { height: 60px; }
.h20 td, .h20 th { line-height: 18px; } .h40 td { line-height: 19px; } .h45 td { line-height: 21.500px; } .h60 td { line-height: 19.500px; }
.h25 td, .h45 td, .h40 td { padding: 0 2px 1px 0; }
td span { line-height: 10px; }
.head { height: 11px; }
.head th { height: 11px; padding: 0 0 0 2px; font: bold 7px/9px "DejaVu Sans", sans-serif; border: 0 solid #999; border-width: 0 1px 1px 0; background: #e6e6e6; overflow: hidden; text-align: center; }
.head .sel { background: #d4d4d4; color: #217346; border-bottom: 2px solid #217346; }
tr:not(.head) th { padding: 0 0 0 1px; font: bold 6.500px/8px "DejaVu Sans", sans-serif; background: #e6e6e6; border: 0 solid #999; border-width: 0 0 1px 1px; vertical-align: bottom; text-align: center; letter-spacing: -.5px; }
td.red { background: #f00; border: 0; border-right: 1px solid #300; }
td.logo { border-color: #000; border-right: 0; direction: ltr; }
.logo svg { width: 328px; height: 119px; }
.pre td:nth-child(n+6) { border-bottom-color: #000; }
.nb td:nth-child(n+7) { border-bottom-color: #b4c6e7; }
td.blue { background: #b4c6e7; border: 0; font-size: 28.300px; padding-bottom: 4px; }
.blue bdi { text-decoration: underline double #111 2px; text-underline-offset: 6px; text-decoration-skip-ink: none; }
.k td:nth-child(n+6) { border-color: #000; }
td.yel { background: #ff0; } td.grn { background: #a9d08e; font-size: 16.500px; }
.k td.bar { background: #c00f14; border-color: #000; padding: 0; }
.k td:nth-last-child(2) { border-right: 0; }
td.date { border-right: 0; padding-right: 379px; font-size: 14.600px; }
.date span { font-size: 15.800px; }
.hd td:nth-child(n+6) { background: #d9d9d9; font-size: 13.600px; padding-right: 2px; }
.hd .bold { -webkit-text-stroke: .6px #111; }
td.lg { font-size: 17.500px; }
td.ds { font-size: 13.900px; }
td.ds.sm { font-size: 13.200px; }
.ds span { font-size: 15.300px; }
.tot td { font-size: 12.400px; padding-right: 1px; }
.tot .tl { padding-right: 3px; }
.pre2 td:nth-child(n+7):nth-child(-n+10) { border-bottom-color: #000; }
.sum td { font-size: 12.400px; padding-right: 2px; }
.sum td:nth-child(6) { border-right-color: #000; border-bottom: 0; }
.sum td:nth-child(n+7):nth-child(-n+9) { border-color: #000; }
.sum td:nth-child(7) { text-align: right; padding-right: 2px; font-size: 11.500px; }
.sum td:nth-child(8) { padding: 0; }
.s1 td:nth-child(n+7):nth-child(-n+9) { background: #70ad47; }
.s2 td:nth-child(n+7):nth-child(-n+9) { background: #ff0; }
.s3 td:nth-child(n+7):nth-child(-n+9) { background: #d0cece; }
.s4 td:nth-child(n+7):nth-child(-n+9) { background: #9bc2e6; }

.sheets { height: 25px; display: flex; color: #444; border-bottom: 1px solid #c6c6c6; }
.hs { width: 169px; display: flex; align-items: center; padding-left: 21px; border-right: 1px solid #999; margin: 3px 0 2px; }
.hs > svg { width: 15px; height: 15px; }
.hthumb { width: 17px; height: 15px; margin-left: 8px; border: 1px solid #888; border-right: 0; background: #fff; }
.hs .dots { width: 4px; height: 14px; margin: 0 16px 0 14px; }
.hs .plus { width: 17px; height: 17px; }
.hs b { margin-left: 15px; color: #217346; letter-spacing: 1px; }
.sheets > span { width: 38px; margin: 3px 0 2px; border-right: 1px solid #999; text-align: center; line-height: 19px; padding-left: 3px; }
.sheets > .n { width: 31px; } .sheets > .dash { width: 39px; } .sheets > .last { width: 123px; font-size: 12.500px; }
.sheets > .cur { margin: -1px 0 0; width: 38px; background: #fff; color: #217346; font-weight: bold; border: 0; border-bottom: 2px solid #217346; line-height: 27px; }
.navi { width: 40px; height: 12px; margin: 7px 0 0 35px; }

.status { height: 24px; background: #f3f3f3; display: flex; align-items: center; color: #333; font-size: 11px; }
.ready { width: 49px; margin-left: 11px; }
.status b { margin-left: 3px; flex: 1; font-weight: 600; }
.view { width: 40px; height: 20px; display: grid; place-items: center; } .act { background: #c8c8c8; height: 20px; }
.zoom { width: 126px; height: 12px; margin-left: 6px; }
.pct { margin: 0 8px 0 13px; }

.task { height: 40px; background: #1f3038; display: flex; color: #fff; }
.start { width: 48px; display: grid; place-items: center; }
.search { width: 288px; background: #f2f2f2; color: #333; font-size: 14.500px; letter-spacing: -.25px; display: flex; align-items: center; padding-left: 12px; border: 1px solid #ccc; }
.search span { margin-left: 10px; width: 175px; }
.peppers { width: 69px; height: 32px; }
.app { width: 49px; display: grid; place-items: center; padding: 0 3px; padding-left: 4px; }
.search + .app { margin-left: 1px; }
.run { background: linear-gradient(#76b9ed, #76b9ed) 5px 100% / 40px 3px no-repeat; }
.xl { background: linear-gradient(#76b9ed, #76b9ed) 0 100% / 45px 3px no-repeat, #4b595f; }
.tray { margin-left: auto; display: grid; align-items: center; grid-template-columns: 24px 24px 25px 27px 28px 60px 45px; width: 243px; }
.lang { font-size: 13px; padding-left: 4px; }
.clock { text-align: center; line-height: 18px; letter-spacing: -.6px; }
.tray > :last-child { margin-left: 13px; }
.mark { position: absolute; left: 560px; top: 926px; width: 160px; height: 80px; fill: #b0b4b6; opacity: .4; }
```
